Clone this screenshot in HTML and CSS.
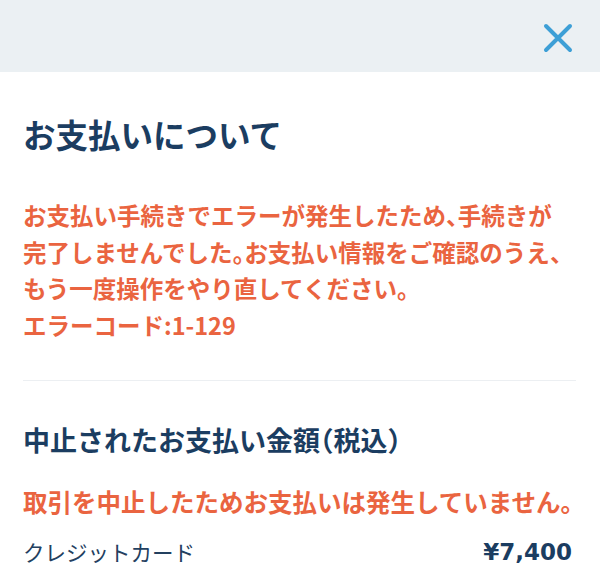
FILE: index.html
```html
<!DOCTYPE html>
<html lang="ja">
<head>
<meta charset="utf-8">
<link rel="stylesheet" href="styles.css">
</head>
<body>
<header class="bar">
  <button class="close" aria-label="閉じる">
    <svg width="30" height="30" viewBox="0 0 30 30"><path d="M3 3 L27 27 M27 3 L3 27" stroke="#3d9fd6" stroke-width="4" stroke-linecap="round" fill="none"/></svg>
  </button>
</header>
<main class="content">
  <h1 class="title">お支払いについて</h1>
  <p class="error"><span class="line">お支払い手続きでエラーが発生したため<span class="p">、</span>手続きが</span><span class="line">完了しませんでした<span class="p">。</span>お支払い情報をご確認のうえ<span class="p">、</span></span><span class="line">もう一度操作をやり直してください<span class="p">。</span></span><span class="line">エラーコード:1-129</span></p>
  <hr class="divider">
  <h2 class="subtitle">中止されたお支払い金額<span class="p">（</span>税込<span class="p">）</span></h2>
  <p class="note">取引を中止したためお支払いは発生していません<span class="p">。</span></p>
  <div class="row">
    <span class="method">クレジットカード</span>
    <span class="amount">¥7,400</span>
  </div>
</main>
</body>
</html>
```
FILE: styles.css
```css
html, body {
  margin: 0;
  padding: 0;
  background: #ffffff;
  font-family: "Noto Sans CJK JP", "Noto Sans", sans-serif;
}
.bar {
  height: 72px;
  background: #ebf0f3;
  display: flex;
  justify-content: flex-end;
  align-items: center;
  padding-right: 27px;
}
.close {
  border: 0;
  background: transparent;
  padding: 0;
  width: 30px;
  height: 30px;
  display: flex;
  margin-top: 3px;
}
.content {
  padding: 0 24px 0 23px;
}
.title {
  margin: 42px 0 0;
  font-size: 32.5px;
  line-height: 40px;
  font-weight: 700;
  color: #1b3d61;
}
.error {
  margin: 43px 0 0;
  font-size: 23.5px;
  line-height: 36.5px;
  font-weight: 700;
  color: #ea6440;
}
.line {
  display: block;
  white-space: nowrap;
}
.p {
  font-feature-settings: "halt";
}
.divider {
  margin: 37px 0 0;
  border: 0;
  height: 1px;
  background: #eceff2;
}
.subtitle {
  margin: 41px 0 0;
  font-size: 27px;
  line-height: 36px;
  font-weight: 700;
  color: #1b3d61;
}
.note {
  margin: 26px 0 0;
  font-size: 24.5px;
  line-height: 36px;
  font-weight: 700;
  color: #ea6440;
  white-space: nowrap;
}
.row {
  margin-top: 15px;
  display: flex;
  justify-content: space-between;
  align-items: center;
  line-height: 34px;
  color: #23405f;
}
.method {
  font-size: 21.5px;
}
.amount {
  font-family: "DejaVu Sans", sans-serif;
  font-size: 23px;
  font-weight: 700;
  color: #1b3d61;
  margin-right: 4px;
}
```
